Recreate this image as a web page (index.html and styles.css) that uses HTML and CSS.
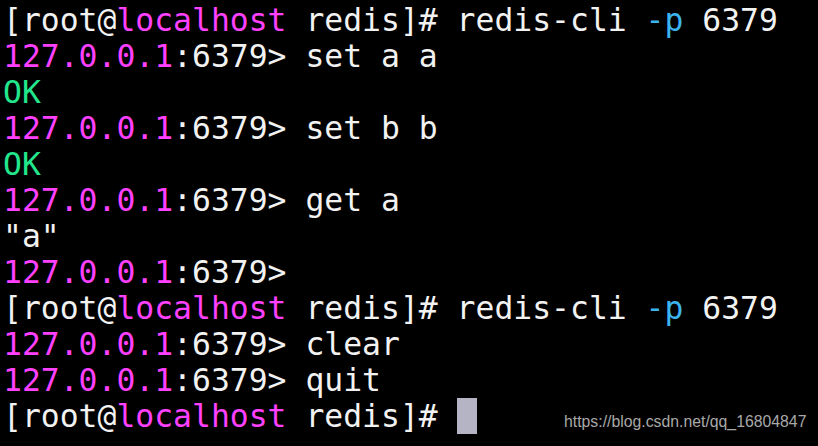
FILE: index.html
```html
<!DOCTYPE html>
<html>
<head>
<meta charset="utf-8">
<link rel="stylesheet" href="styles.css">
</head>
<body>
<div class="term">
<div class="line">[root@<span class="m">localhost</span> redis]# redis-cli <span class="c">-p</span> 6379</div>
<div class="line"><span class="m">127.0.0.1</span>:6379&gt; set a a</div>
<div class="line"><span class="g">OK</span></div>
<div class="line"><span class="m">127.0.0.1</span>:6379&gt; set b b</div>
<div class="line"><span class="g">OK</span></div>
<div class="line"><span class="m">127.0.0.1</span>:6379&gt; get a</div>
<div class="line">"a"</div>
<div class="line"><span class="m">127.0.0.1</span>:6379&gt;</div>
<div class="line">[root@<span class="m">localhost</span> redis]# redis-cli <span class="c">-p</span> 6379</div>
<div class="line"><span class="m">127.0.0.1</span>:6379&gt; clear</div>
<div class="line"><span class="m">127.0.0.1</span>:6379&gt; quit</div>
<div class="line">[root@<span class="m">localhost</span> redis]# <span class="cursor"></span></div>
</div>
<div class="wm">https://blog.csdn.net/qq_16804847</div>
</body>
</html>
```
FILE: styles.css
```css
html, body {
  margin: 0;
  padding: 0;
  background: #000;
  width: 818px;
  height: 446px;
  overflow: hidden;
}
.term {
  padding: 2px 0 0 3px;
  font-family: "DejaVu Sans Mono", monospace;
  font-size: 31.4px;
  line-height: 36px;
  color: #f2f2f2;
}
.line {
  height: 36px;
  white-space: pre;
}
.m { color: #ff40ff; }
.c { color: #3cb4f0; }
.g { color: #22e68c; }
.cursor {
  display: inline-block;
  width: 20px;
  height: 36px;
  background: #b4b4c4;
  vertical-align: top;
}
.wm {
  position: absolute;
  left: 564px;
  top: 413px;
  font-family: "Liberation Sans", Arial, sans-serif;
  font-size: 15.8px;
  color: #a8a8a8;
}
```
